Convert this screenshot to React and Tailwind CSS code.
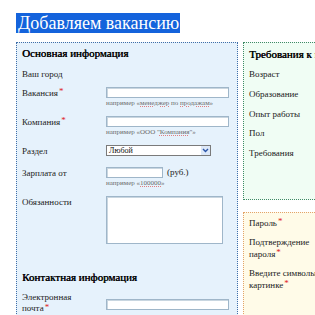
import React from 'react';

function Star() {
  return <span className="text-[#e0201b] align-top text-[9px] leading-none ml-[1px]">*</span>;
}

function Hint({ children }) {
  return <div className="text-[7px] leading-[8px] text-[#6b6b6b] mt-[1px] whitespace-nowrap">{children}</div>;
}

function Spell({ children }) {
  return <span className="underline decoration-dotted decoration-[#e08080] underline-offset-1">{children}</span>;
}

function Heading({ className = '', children }) {
  return (
    <div className={`text-[11px] leading-[14px] text-black whitespace-nowrap [text-shadow:0.4px_0_0_#000] ${className}`}>
      {children}
    </div>
  );
}

function Row({ label, className = '', children }) {
  return (
    <div className={`flex ${className}`}>
      <div className="w-[84px] shrink-0 text-[9px] leading-[13px] text-[#222]">{label}</div>
      <div className="flex-1">{children}</div>
    </div>
  );
}

function Input({ w = 'w-[123px]' }) {
  return <div className={`${w} h-[11px] bg-white border border-[#9fb6c9] shadow-[inset_1px_1px_0_#c9d6e0]`} />;
}

export default function App() {
  return (
    <div className="w-[315px] h-[315px] overflow-hidden bg-white font-['Liberation_Serif','Times_New_Roman',serif]">
      <div className="flex pt-[13px] pl-[16px]">
        <div className="bg-[#1463dc] text-white text-[18px] leading-[20px] pl-[2px] pr-[1px] whitespace-nowrap">
          Добавляем вакансию
        </div>
      </div>

      <div className="flex mt-[9px] pl-[16px] gap-[5px]">
        {/* left panel */}
        <div className="w-[222px] shrink-0 h-[300px] bg-[#e6f2fc] border border-dotted border-[#3f6ea8] pl-[5px] pt-[3px]">
          <Heading>Основная информация</Heading>

          <Row label="Ваш город" className="mt-[8px] h-[13px]" />

          <Row label={<>Вакансия<Star /></>} className="mt-[6px]">
            <Input />
            <Hint>например «<Spell>менеджер</Spell> по <Spell>продажам</Spell>»</Hint>
          </Row>

          <Row label={<>Компания<Star /></>} className="mt-[9px]">
            <Input />
            <Hint>например «ООО "<Spell>Компания</Spell>"»</Hint>
          </Row>

          <Row label="Раздел" className="mt-[9px]">
            <div className="w-[105px] h-[11px] bg-white border border-[#7a7a7a] flex items-center justify-between">
              <span className="text-[8px] leading-none pl-[2px] text-[#111]">Любой</span>
              <span className="w-[9px] h-[9px] bg-[#dce8f8] flex items-center justify-center">
                <svg width="7" height="5" viewBox="0 0 7 5">
                  <path d="M1 1 L3.5 3.5 L6 1" stroke="#2a55a8" strokeWidth="1.4" fill="none" />
                </svg>
              </span>
            </div>
          </Row>

          <Row label="Зарплата от" className="mt-[9px]">
            <div className="flex items-center gap-[4px]">
              <Input w="w-[57px]" />
              <span className="text-[9px] leading-[11px] text-[#222]">(руб.)</span>
            </div>
            <Hint>например «<Spell>100000</Spell>»</Hint>
          </Row>

          <Row label="Обязанности" className="mt-[9px]">
            <div className="w-[117px] h-[48px] bg-white border border-[#9fb6c9] shadow-[inset_1px_1px_0_#c9d6e0]" />
          </Row>

          <Heading className="mt-[26px]">Контактная информация</Heading>

          <div className="flex mt-[8px]">
            <div className="w-[84px] shrink-0 text-[9px] leading-[11px] text-[#222]">
              Электронная<br />почта<Star />
            </div>
            <div className="pt-[7px]">
              <Input />
            </div>
          </div>
        </div>

        {/* right column */}
        <div className="flex flex-col shrink-0">
          <div className="w-[120px] h-[158px] bg-[#f0fdf4] border border-dotted border-[#3f8a66] pl-[5px] pt-[4px] text-[9px] text-[#222]">
            <Heading>Требования к кандидату</Heading>
            <div className="mt-[7px] leading-[13px]">Возраст</div>
            <div className="mt-[7px] leading-[13px]">Образование</div>
            <div className="mt-[7px] leading-[13px]">Опыт работы</div>
            <div className="mt-[6px] leading-[13px]">Пол</div>
            <div className="mt-[7px] leading-[13px]">Требования</div>
          </div>

          <div className="mt-[12px] w-[120px] h-[120px] bg-[#fffbe8] border border-dotted border-[#e3a36a] pl-[5px] pt-[4px] text-[9px] text-[#222] leading-[12px]">
            <div>Пароль<Star /></div>
            <div className="mt-[7px]">Подтверждение<br />пароля<Star /></div>
            <div className="mt-[7px] whitespace-nowrap">Введите символы на<br />картинке<Star /></div>
          </div>
        </div>
      </div>
    </div>
  );
}
